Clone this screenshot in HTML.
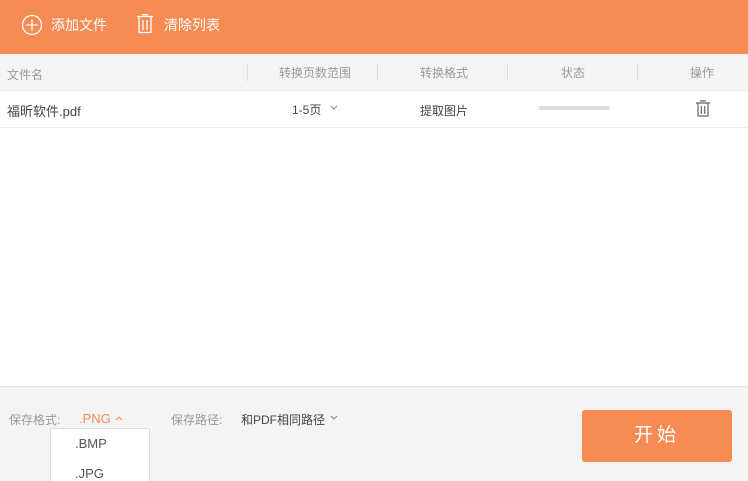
<!DOCTYPE html><html><head><meta charset="utf-8"><style>
*{margin:0;padding:0;box-sizing:border-box}
html,body{width:748px;height:481px;overflow:hidden}
body{background:#fff;font-family:"Liberation Sans","Noto Sans CJK SC",sans-serif;position:relative}
.a{position:absolute;white-space:nowrap}
</style></head><body>
<div class="a" style="left:0;top:0;width:748px;height:54px;background:#f78b54"></div>
<svg class="a" style="left:21px;top:14px" width="22" height="22"><circle cx="11" cy="11" r="9.5" fill="none" stroke="#fff" stroke-width="1.3"/><path d="M11 5.5v11M5.5 11h11" stroke="#fff" stroke-width="1.3"/></svg>
<div class="a" style="left:51px;top:15px;color:#fff;font-size:14px">添加文件</div>
<svg class="a" style="left:136px;top:14px" width="18" height="20"><path d="M1 2.5h16M3 2.5v16h12v-16M7 6v10M11 6v10M6 0.7h6" stroke="#fff" stroke-width="1.3" fill="none"/></svg>
<div class="a" style="left:164px;top:15px;color:#fff;font-size:14px">清除列表</div>
<div class="a" style="left:0;top:54px;width:748px;height:37px;background:#f4f4f4;border-bottom:1px solid #e8e8e8"></div>
<div class="a" style="left:7px;top:66px;color:#999;font-size:12px">文件名</div>
<div class="a" style="left:247px;top:64px;width:1px;height:17px;background:#ddd"></div>
<div class="a" style="left:279px;top:64px;color:#999;font-size:12px">转换页数范围</div>
<div class="a" style="left:377px;top:64px;width:1px;height:17px;background:#ddd"></div>
<div class="a" style="left:420px;top:64px;color:#999;font-size:12px">转换格式</div>
<div class="a" style="left:507px;top:64px;width:1px;height:17px;background:#ddd"></div>
<div class="a" style="left:561px;top:64px;color:#999;font-size:12px">状态</div>
<div class="a" style="left:637px;top:64px;width:1px;height:17px;background:#ddd"></div>
<div class="a" style="left:690px;top:64px;color:#999;font-size:12px">操作</div>
<div class="a" style="left:7px;top:101px;color:#444;font-size:13px">福昕软件.pdf</div>
<div class="a" style="left:292px;top:101px;color:#444;font-size:12px">1-5页</div>
<svg class="a" style="left:330px;top:105px" width="8" height="6"><path d="M1 1l3 3 3-3" stroke="#888" fill="none"/></svg>
<div class="a" style="left:420px;top:102px;color:#444;font-size:12px">提取图片</div>
<div class="a" style="left:539px;top:106px;width:71px;height:4px;border-radius:2px;background:#ddd"></div>
<svg class="a" style="left:695px;top:100px" width="16" height="17"><path d="M1 3h14M3 3v13h10V3M6.3 6v8M9.7 6v8M5 1h6" stroke="#666" stroke-width="1.2" fill="none"/></svg>
<div class="a" style="left:0;top:127px;width:748px;height:1px;background:#eee"></div>
<div class="a" style="left:0;top:386px;width:748px;height:95px;background:#f4f4f4;border-top:1px solid #ddd"></div>
<div class="a" style="left:9px;top:411px;color:#999;font-size:12px">保存格式:</div>
<div class="a" style="left:79px;top:411px;color:#f78b54;font-size:13px">.PNG</div>
<svg class="a" style="left:115px;top:415px" width="8" height="6"><path d="M1 5l3-3 3 3" stroke="#f78b54" fill="none"/></svg>
<div class="a" style="left:171px;top:411px;color:#999;font-size:12px">保存路径:</div>
<div class="a" style="left:241px;top:411px;color:#444;font-size:12px">和PDF相同路径</div>
<svg class="a" style="left:330px;top:415px" width="8" height="6"><path d="M1 1l3 3 3-3" stroke="#888" fill="none"/></svg>
<div class="a" style="left:50px;top:428px;width:100px;height:53px;background:#fff;border:1px solid #ddd;border-bottom:none"></div>
<div class="a" style="left:75px;top:436px;color:#555;font-size:13px">.BMP</div>
<div class="a" style="left:75px;top:466px;color:#555;font-size:13px">.JPG</div>
<div class="a" style="left:582px;top:410px;width:150px;height:52px;background:#f78b54;border-radius:3px;color:#fff;font-size:19px;text-align:center;line-height:52px;letter-spacing:4px">开始</div>
</body></html>
